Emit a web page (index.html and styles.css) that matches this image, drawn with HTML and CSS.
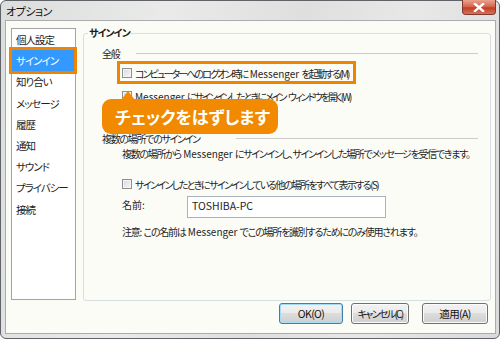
FILE: index.html
```html
<!DOCTYPE html>
<html lang="ja">
<head>
<meta charset="utf-8">
<link rel="stylesheet" href="styles.css">
</head>
<body>
<div class="window">
  <div class="titlebar">
    <span class="title">オプション</span>
    <div class="close"><svg width="12" height="9" viewBox="0 0 12 9"><path d="M2 1 L10 8 M10 1 L2 8" stroke="#fff" stroke-width="2.4" stroke-linecap="square"/></svg></div>
  </div>
  <div class="client">
    <div class="content">
      <ul class="nav">
        <li>個人設定</li>
        <li class="sel">サインイン</li>
        <li>知り合い</li>
        <li>メッセージ</li>
        <li>履歴</li>
        <li>通知</li>
        <li>サウンド</li>
        <li>プライバシー</li>
        <li>接続</li>
      </ul>
      <fieldset class="panel">
        <legend>サインイン</legend>
        <div class="inner">
          <div class="head h1"><span class="hl">全般</span><span class="rule"></span></div>
          <div class="row r1"><span class="cb"></span><span>コンピューターへのログオン時に<span class="en"> Messenger </span>を起動する(M)</span></div>
          <div class="row r2"><span class="cb"></span><span><span class="en">Messenger </span>にサインインしたときにメイン<span class="en"> </span>ウィンドウを開く(W)</span></div>
          <div class="head h2"><span class="hl">複数の場所でのサインイン</span><span class="rule"></span></div>
          <div class="desc">複数の場所から<span class="en"> Messenger </span>にサインインし、サインインした場所でメッセージを受信できます。</div>
          <div class="row r3"><span class="cb"></span><span>サインインしたときにサインインしている他の場所をすべて表示する(S)</span></div>
          <div class="name"><span class="nl">名前:</span><div class="input">TOSHIBA-PC</div></div>
          <div class="note">注意:<span class="en"> </span>この名前は<span class="en"> Messenger </span>でこの場所を識別するためにのみ使用されます。</div>
        </div>
      </fieldset>
    </div>
    <div class="buttons">
      <button class="btn ok">OK(O)</button>
      <button class="btn cancel">キャンセル(C)</button>
      <button class="btn apply">適用(A)</button>
    </div>
  </div>
  <div class="highlight"></div>
  <div class="callout">チェックをはずします</div>
</div>
</body>
</html>
```

FILE: styles.css
```css
* { box-sizing: border-box; }
html, body { margin: 0; padding: 0; background: #fff; }
body {
  width: 500px; height: 340px; overflow: hidden;
  font-family: "Noto Sans CJK JP", "Noto Sans", sans-serif;
  font-size: 10px; color: #1e1e1e;
  letter-spacing: -1.3px;
  font-feature-settings: "palt";
}
.en { letter-spacing: 0; font-size: 10px; }
.window {
  position: relative;
  width: 500px; height: 339px;
  border: 1px solid #5f6266;
  border-radius: 6px;
  background: linear-gradient(100deg, #dcdddd 0%, #eaeaea 30%, #dfdfdf 55%, #e8e8e8 75%, #d9dadb 100%);
  padding: 0 3px 4px 4px;
  display: flex; flex-direction: column;
}
.titlebar {
  height: 19px; flex: none;
  display: flex; align-items: flex-start; justify-content: space-between;
}
.title { margin: 2px 0 0 1px; line-height: 16px; font-size: 11px; letter-spacing: -0.5px; color: #111; }
.close {
  width: 34px; height: 15px; margin-top: -1px;
  border: 1px solid #7d3a2f; border-top: none;
  border-radius: 0 0 4px 4px;
  background: linear-gradient(#e9a48f, #d4624a 50%, #c23b22 55%, #d8735a);
  display: flex; align-items: center; justify-content: center;
}
.client {
  flex: 1;
  background: #fcfcf7;
  border: 1px solid #a9abad;
  padding: 6px 4px 0 5px;
  display: flex; flex-direction: column;
}
.content { display: flex; height: 274px; }
.nav {
  list-style: none; margin: 1px 0 1px 0; padding: 0;
  width: 65px;
  background: #fff;
  border: 1px solid #a3a3a3;
  font-size: 10.5px;
  letter-spacing: -1px;
}
.nav li {
  height: 21.2px; line-height: 21px;
  padding-left: 4px;
  margin-right: 1px;
  white-space: nowrap;
}
.nav li.sel {
  background: #3399ff; color: #fff;
  outline: 3px solid #f08300;
}
.panel {
  flex: 1;
  margin: 0 0 0 7px;
  padding: 0;
  border: 1px solid #d6dde5;
  border-radius: 3px;
  min-width: 0;
}
.panel legend {
  margin-left: 4px;
  padding: 0 1px;
  line-height: 12px;
  font-weight: bold;
  letter-spacing: -1px;
  color: #1a1a1a;
}
.inner { padding: 0 12px 0 18px; }
.head { display: flex; align-items: center; height: 16px; white-space: nowrap; }
.head .rule { flex: 1; border-top: 1px solid #c9cbcc; }
.h1 { margin-top: 6px; }
.h1 .hl { width: 34px; }
.h2 { margin-top: 26px; }
.h2 .hl { width: 134px; }
.row { display: flex; align-items: center; height: 16px; padding-left: 20px; white-space: nowrap; }
.r1 { margin-top: 4px; letter-spacing: -1.9px; }
.r2 { margin-top: 7px; letter-spacing: -1.95px; }
.r3 { margin-top: 14px; letter-spacing: -1.6px; }
.cb {
  width: 10px; height: 10px; margin-right: 3px; flex: none;
  border: 1px solid #8e8f8f;
  background: linear-gradient(135deg, #d6dbe0, #f6f7f8);
  box-shadow: inset 0 0 0 1px #f4f4f4;
}
.desc { height: 16px; line-height: 16px; padding-left: 20px; white-space: nowrap; }
.name { display: flex; align-items: flex-start; margin-top: 4px; padding-left: 20px; }
.nl { width: 65px; line-height: 18px; letter-spacing: 0; }
.input {
  width: 199px; height: 22px;
  border: 1px solid #a9b3bd;
  background: #fff;
  padding: 0 4px; line-height: 17px;
  letter-spacing: 0; font-size: 10.5px;
}
.note { margin-top: 6px; height: 16px; line-height: 16px; padding-left: 20px; white-space: nowrap; letter-spacing: -1.22px; }
.buttons {
  display: flex; justify-content: flex-end;
  margin-top: 2px; padding-right: 3px;
}
.btn {
  height: 21px;
  font: inherit; font-size: 10.5px; color: #111;
  letter-spacing: -0.6px;
  border: 1px solid #707070; border-radius: 3px;
  background: linear-gradient(#f2f2f2 0%, #ebebeb 45%, #dddddd 50%, #cfcfcf 100%);
  box-shadow: inset 0 0 0 1px #fbfbfb;
  padding: 0; white-space: nowrap;
}
.ok { width: 64px; border-color: #3c7fb1; box-shadow: inset 0 0 0 1px #a8dcf5; }
.cancel { width: 58px; margin-left: 8px; font-size: 10px; letter-spacing: -1.7px; }
.apply { width: 66px; margin-left: 13px; }
.highlight {
  position: absolute; left: 116px; top: 60px;
  width: 239px; height: 23px;
  border: 3px solid #f08300;
}
.callout {
  position: absolute; left: 101px; top: 98px;
  width: 176px; height: 35px;
  background: #f18a00; color: #fff;
  border-radius: 9px;
  font-size: 17px; font-weight: bold;
  letter-spacing: 0;
  line-height: 35px;
  padding-left: 13px;
}
.callout::before {
  content: ""; position: absolute;
  left: 19px; top: -8px;
  border-left: 7px solid transparent;
  border-right: 7px solid transparent;
  border-bottom: 9px solid #f18a00;
}
```
